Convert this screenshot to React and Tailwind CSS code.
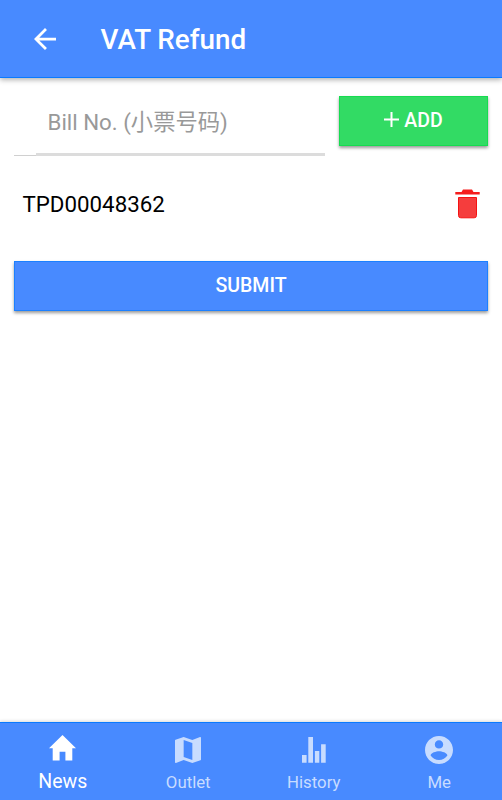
import { useState } from "react"

const HomeIcon = () => (
  <svg className="w-[27px] h-[26px]" viewBox="0 0 27 26" fill="currentColor">
    <path d="M10.6 25.5V16.8H16.4V25.5H23.3V13.2H27L13.5 0L0 13.2H3.7V25.5Z" />
  </svg>
)

const MapIcon = () => (
  <svg className="w-[26px] h-[26px]" viewBox="3 3 18 18" fill="currentColor">
    <path d="M20.5 3l-.16.03L15 5.1 9 3 3.36 4.9c-.21.07-.36.25-.36.48V20.5c0 .28.22.5.5.5l.16-.03L9 18.9l6 2.1 5.64-1.9c.21-.07.36-.25.36-.48V3.5c0-.28-.22-.5-.5-.5zM15 19l-6-2.11V5l6 2.11V19z" />
  </svg>
)

const StatsIcon = () => (
  <svg className="w-[24px] h-[26px]" viewBox="0 0 24 26" fill="currentColor">
    <path d="M0 18H4.6V25.7H0ZM6.3 0H11V25.7H6.3ZM12.9 14H17.3V25.7H12.9ZM19.1 7.3H23.7V25.7H19.1Z" />
  </svg>
)

const ContactIcon = () => (
  <svg className="w-[28px] h-[28px]" viewBox="2 2 20 20" fill="currentColor">
    <path d="M12 2C6.48 2 2 6.48 2 12s4.48 10 10 10 10-4.48 10-10S17.52 2 12 2zm0 3c1.66 0 3 1.34 3 3s-1.34 3-3 3-3-1.34-3-3 1.34-3 3-3zm0 14.2c-2.5 0-4.71-1.28-6-3.22.03-1.99 4-3.08 6-3.08 1.99 0 5.97 1.09 6 3.08-1.29 1.94-3.5 3.22-6 3.22z" />
  </svg>
)

const tabs = [
  { label: "News", Icon: HomeIcon },
  { label: "Outlet", Icon: MapIcon },
  { label: "History", Icon: StatsIcon },
  { label: "Me", Icon: ContactIcon },
]

export default function App() {
  const [activeTab, setActiveTab] = useState("News")
  const [billNo, setBillNo] = useState("")
  const [bills, setBills] = useState(["TPD00048362"])

  const addBill = () => {
    if (!billNo.trim()) return
    setBills((prev) => [...prev, billNo.trim()])
    setBillNo("")
  }

  const removeBill = (index) => {
    setBills((prev) => prev.filter((_, i) => i !== index))
  }

  return (
    <div className="flex h-screen flex-col overflow-hidden bg-white font-['Roboto','Noto_Sans_CJK_SC',sans-serif]">
      {/* Header */}
      <header className="flex h-[78px] shrink-0 items-center border-b border-[#0a7aff] bg-[#488aff] pl-[34px] text-white shadow-[0_2px_5px_rgba(0,0,0,0.3)]">
        <button aria-label="Back" className="mt-[1px]">
          <svg className="h-[22px] w-[22px]" viewBox="4 4 16 16" fill="currentColor">
            <path d="M20 11H7.83l5.59-5.59L12 4l-8 8 8 8 1.41-1.41L7.83 13H20v-2z" />
          </svg>
        </button>
        <h1 className="ml-[44.5px] mt-[2px] text-[27.8px] font-medium">VAT Refund</h1>
      </header>

      <main className="min-h-0 flex-1 px-[14px] pt-[18px]">
        {/* Bill number form */}
        <div className="flex h-[60px]">
          <div className="flex w-[311px]">
            <div className="h-[60px] w-[22px] border-b border-[#d0d0d0]" />
            <div className="h-[60px] flex-1 border-b-[3px] border-[#dcdcdc]">
              <input
                value={billNo}
                onChange={(e) => setBillNo(e.target.value)}
                placeholder="Bill No. (小票号码)"
                className="h-[52px] w-full pl-[11.5px] text-[22.3px] text-black outline-none placeholder:text-[#999999]"
              />
            </div>
          </div>
          <button
            onClick={addBill}
            className="ml-[14px] flex h-[50px] w-[149px] items-center justify-center border border-[#16dc50] bg-[#32db64] text-[19.5px] font-medium text-white shadow-[0_2px_3px_rgba(0,0,0,0.4)]"
          >
            <svg className="mb-[3px] mr-[5px] h-[15px] w-[15px]" viewBox="0 0 15 15" fill="currentColor">
              <path d="M6.5 0h2v6.5H15v2H8.500V15h-2V8.500H0v-2h6.500z" />
            </svg>
            ADD
          </button>
        </div>

        {/* Added bills */}
        {bills.map((bill, index) => (
          <div key={index} className="mt-[18px] flex h-[60px] items-center justify-between pl-[8.5px] pr-[8px]">
            <span className="pt-[2px] text-[22.3px] text-black">{bill}</span>
            <button aria-label="Delete" onClick={() => removeBill(index)}>
              <svg className="h-[30px] w-[25px]" viewBox="0 0 25 30" fill="#f53d3d">
                <path d="M.3 3H6.500L8 .5H17L18.500 3H24.700V5.500H.3Z" fill="#f51c1c" />
                <path d="M3.500 8.500H21.500V26.500Q21.500 28.800 19.200 28.800H5.800Q3.500 28.800 3.500 26.500Z" stroke="#f51212" />
              </svg>
            </button>
          </div>
        ))}

        <button className="mt-[27px] flex h-[50px] w-full items-center justify-center border border-[#1c80ff] bg-[#488aff] text-[19.5px] font-medium text-white shadow-[0_2px_3px_rgba(0,0,0,0.4)]">
          SUBMIT
        </button>
      </main>

      {/* Bottom tabs */}
      <nav className="grid h-[78px] shrink-0 grid-cols-4 border-t border-[#0a7aff] bg-[#488aff] shadow-[0_-1px_3px_rgba(0,0,0,0.15)]">
        {tabs.map(({ label, Icon }) => (
          <button
            key={label}
            onClick={() => setActiveTab(label)}
            className={`flex flex-col items-center ${activeTab === label ? "text-white" : "text-[#c8dcff]"}`}
          >
            <span className={`flex h-[28px] items-center ${activeTab === label ? "mt-[11px]" : "mt-[13px]"}`}>
              <Icon />
            </span>
            <span className={activeTab === label ? "mt-[7px] text-[19.5px] leading-[26px]" : "mt-[6px] text-[16.8px] leading-[24px]"}>
              {label}
            </span>
          </button>
        ))}
      </nav>
    </div>
  )
}
